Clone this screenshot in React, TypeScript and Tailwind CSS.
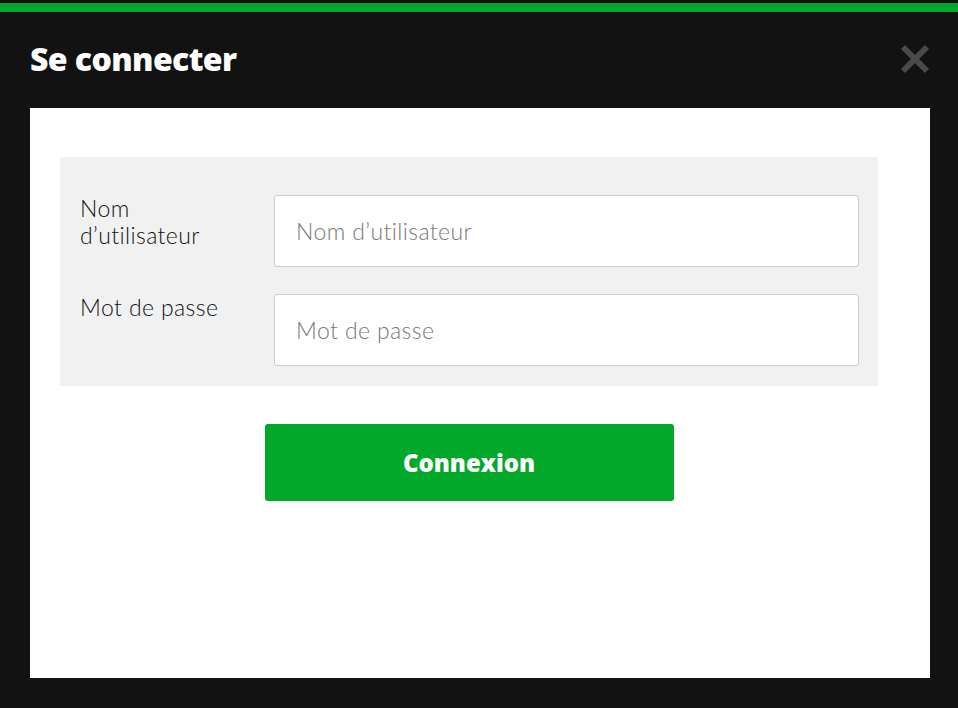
import React from "react";

export default function App() {
  return (
    <div className="w-[958px] h-[708px] bg-[#121212] pt-[3px] overflow-hidden" style={{ fontFamily: "Lato, 'Liberation Sans', sans-serif" }}>
      <div className="h-[9px] bg-[#02a829]" />
      <div className="h-[96px] flex items-center justify-between pl-[30px] pr-[28px]">
        <h1 className="text-white text-[32px] font-extrabold tracking-[-0.6px] pb-[2px]" style={{ fontFamily: "'Open Sans', 'Liberation Sans', sans-serif" }}>
          Se connecter
        </h1>
        <svg width="30" height="30" viewBox="0 0 30 30" className="mb-[3px]">
          <line x1="3" y1="3" x2="27" y2="27" stroke="#4a4a4a" strokeWidth="6" />
          <line x1="27" y1="3" x2="3" y2="27" stroke="#4a4a4a" strokeWidth="6" />
        </svg>
      </div>
      <div className="ml-[30px] w-[900px] h-[570px] bg-white pl-[30px] pt-[49px]">
        <div className="w-[818px]">
          <div className="bg-[#f1f1f1] pl-[20px] pr-[19px] pt-[38px] pb-[20px] flex flex-col gap-[27px]">
            <div className="flex items-start">
              <label className="w-[194px] pr-[36px] text-[23px] leading-[27px] tracking-[0.4px] font-light text-[#111]">
                Nom d’utilisateur
              </label>
              <input
                className="flex-1 h-[72px] bg-white border border-[#cccccc] rounded-[3px] pl-[21px] text-[23px] tracking-[0.4px] font-light text-[#333] placeholder:text-[#777777] outline-none"
                placeholder="Nom d’utilisateur"
              />
            </div>
            <div className="flex items-start">
              <label className="w-[194px] pr-[36px] text-[23px] leading-[27px] tracking-[0.4px] font-light text-[#111]">
                Mot de passe
              </label>
              <input
                type="password"
                className="flex-1 h-[72px] bg-white border border-[#cccccc] rounded-[3px] pl-[21px] text-[23px] tracking-[0.4px] font-light text-[#333] placeholder:text-[#777777] outline-none"
                placeholder="Mot de passe"
              />
            </div>
          </div>
          <div className="flex justify-center mt-[38px]">
            <button
              className="w-[409px] h-[77px] bg-[#02a829] rounded-[3px] text-white text-[24px] font-extrabold"
              style={{ fontFamily: "'Open Sans', 'Liberation Sans', sans-serif" }}
            >
              Connexion
            </button>
          </div>
        </div>
      </div>
    </div>
  );
}
